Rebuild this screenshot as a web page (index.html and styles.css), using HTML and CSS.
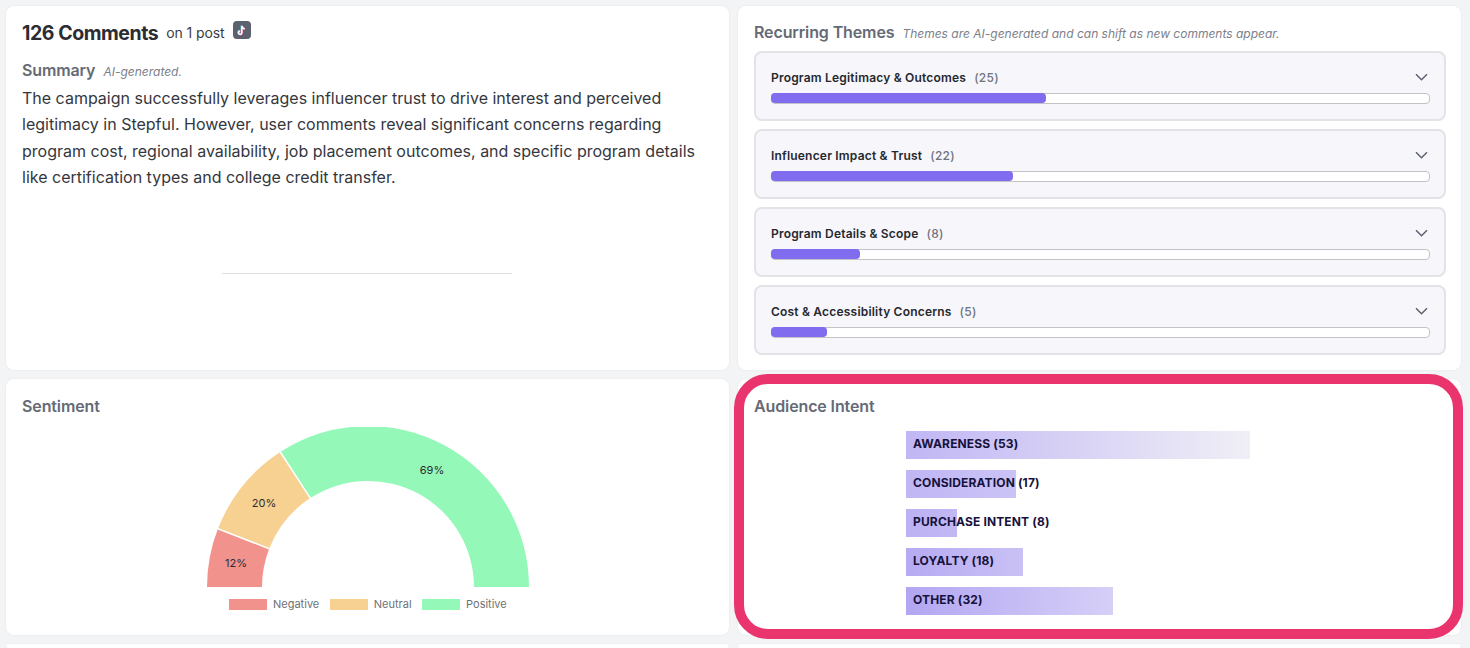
FILE: index.html
```html
<!DOCTYPE html>
<html lang="en">
<head>
    <meta charset="UTF-8">
    <title>Comments Analysis</title>
    <link rel="stylesheet" href="styles.css">
</head>
<body>
    <div class="dashboard">
        <section class="card summary-card">
            <div class="comments-head">
                <h1 class="comments-count">126 Comments</h1>
                <span class="comments-posts">on 1 post</span>
                <span class="platform-badge">
                    <svg viewBox="0 0 18 18" width="18" height="18">
                        <path class="note note-cyan" d="M8.4 4.6v6.9a1.7 1.7 0 1 1-1.7-1.7M8.4 4.6c.2 1.7 1.3 2.7 2.9 2.8"/>
                        <path class="note note-red" d="M9.4 5.2v6.9a1.7 1.7 0 1 1-1.7-1.7M9.4 5.2c.2 1.7 1.3 2.7 2.9 2.8"/>
                        <path class="note note-white" d="M8.9 4.9v6.9a1.7 1.7 0 1 1-1.7-1.7M8.9 4.9c.2 1.7 1.3 2.7 2.9 2.8"/>
                    </svg>
                </span>
            </div>
            <div class="section-head summary-head">
                <h2 class="section-title">Summary</h2>
                <span class="section-note">AI-generated.</span>
            </div>
            <p class="summary-text">The campaign successfully leverages influencer trust to drive interest and perceived legitimacy in Stepful. However, user comments reveal significant concerns regarding program cost, regional availability, job placement outcomes, and specific program details like certification types and college credit transfer.</p>
            <hr class="summary-divider">
        </section>

        <section class="card themes-card">
            <div class="section-head">
                <h2 class="section-title">Recurring Themes</h2>
                <span class="section-note">Themes are AI-generated and can shift as new comments appear.</span>
            </div>
            <div class="theme-list">
                <div class="theme">
                    <div class="theme-top">
                        <span class="theme-name">Program Legitimacy &amp; Outcomes</span>
                        <span class="theme-count">(25)</span>
                        <svg class="chevron" viewBox="0 0 13 8" width="13" height="8"><path d="M1 1.2l5.5 5.5L12 1.2"/></svg>
                    </div>
                    <div class="theme-track"><div class="theme-fill" style="width: 41.8%"></div></div>
                </div>
                <div class="theme">
                    <div class="theme-top">
                        <span class="theme-name">Influencer Impact &amp; Trust</span>
                        <span class="theme-count">(22)</span>
                        <svg class="chevron" viewBox="0 0 13 8" width="13" height="8"><path d="M1 1.2l5.5 5.5L12 1.2"/></svg>
                    </div>
                    <div class="theme-track"><div class="theme-fill" style="width: 36.8%"></div></div>
                </div>
                <div class="theme">
                    <div class="theme-top">
                        <span class="theme-name">Program Details &amp; Scope</span>
                        <span class="theme-count">(8)</span>
                        <svg class="chevron" viewBox="0 0 13 8" width="13" height="8"><path d="M1 1.2l5.5 5.5L12 1.2"/></svg>
                    </div>
                    <div class="theme-track"><div class="theme-fill" style="width: 13.5%"></div></div>
                </div>
                <div class="theme">
                    <div class="theme-top">
                        <span class="theme-name">Cost &amp; Accessibility Concerns</span>
                        <span class="theme-count">(5)</span>
                        <svg class="chevron" viewBox="0 0 13 8" width="13" height="8"><path d="M1 1.2l5.5 5.5L12 1.2"/></svg>
                    </div>
                    <div class="theme-track"><div class="theme-fill" style="width: 8.5%"></div></div>
                </div>
            </div>
        </section>

        <section class="card sentiment-card">
            <h2 class="section-title">Sentiment</h2>
            <svg class="gauge" viewBox="207 427 322 160" width="322" height="160">
                <path class="slice-negative" d="M207 587A161 161 0 0 1 217.9 528.8L269.2 548.7A106 106 0 0 0 262 587Z"/>
                <path class="slice-neutral" d="M217.9 528.8A161 161 0 0 1 280.3 452L310.3 498.1A106 106 0 0 0 269.2 548.7Z"/>
                <path class="slice-positive" d="M280.3 452A161 161 0 0 1 529 587H474A106 106 0 0 0 310.3 498.1Z"/>
                <path class="slice-gap" d="M217.9 528.8L269.2 548.7M280.3 452L310.3 498.1"/>
                <text class="gauge-label" x="236" y="567">12%</text>
                <text class="gauge-label" x="264" y="507">20%</text>
                <text class="gauge-label" x="432" y="474">69%</text>
            </svg>
            <div class="legend">
                <span class="legend-item"><i class="swatch swatch-negative"></i>Negative</span>
                <span class="legend-item"><i class="swatch swatch-neutral"></i>Neutral</span>
                <span class="legend-item"><i class="swatch swatch-positive"></i>Positive</span>
            </div>
        </section>

        <section class="card intent-card">
            <h2 class="section-title">Audience Intent</h2>
            <div class="intent-list">
                <div class="intent-bar intent-awareness" style="width: 344px"><span>AWARENESS (53)</span></div>
                <div class="intent-bar intent-consideration" style="width: 110px"><span>CONSIDERATION (17)</span></div>
                <div class="intent-bar intent-purchase" style="width: 51px"><span>PURCHASE INTENT (8)</span></div>
                <div class="intent-bar intent-loyalty" style="width: 117px"><span>LOYALTY (18)</span></div>
                <div class="intent-bar intent-other" style="width: 207px"><span>OTHER (32)</span></div>
            </div>
            <div class="highlight-ring"></div>
        </section>

        <section class="card next-card"></section>
        <section class="card next-card"></section>
    </div>
</body>
</html>
```

FILE: styles.css
```css
* {
    margin: 0;
    padding: 0;
    box-sizing: border-box;
}

html, body {
    height: 648px;
    overflow: hidden;
}

body {
    background-color: #f3f4f6;
    color: #2b2d33;
    font-family: Inter, "Noto Sans", sans-serif;
}

.dashboard {
    display: grid;
    grid-template-columns: 723px 723px;
    grid-template-rows: 364px 256px 4px;
    gap: 9px;
    padding: 6px 9px 0 6px;
}

.card {
    position: relative;
    background: #fff;
    border-radius: 8px;
    box-shadow: 0 0 2px rgba(0, 0, 0, 0.08);
    padding: 16px;
}

/* summary */
.comments-head {
    display: flex;
    align-items: flex-start;
    height: 24px;
}

.comments-count {
    font-size: 19.5px;
    line-height: 22px;
    font-weight: 700;
    letter-spacing: -0.45px;
    color: #2b2d33;
}

.comments-posts {
    margin: 2px 0 0 8px;
    font-size: 14px;
    line-height: 18px;
    letter-spacing: -0.1px;
    color: #3a3d45;
}

.platform-badge {
    display: flex;
    width: 18px;
    height: 18px;
    margin: -1px 0 0 8px;
    background: #5c6170;
    border-radius: 4px;
}

.note {
    fill: none;
    stroke-width: 1.5;
}

.note-cyan { stroke: #58e3ea; }
.note-red { stroke: #f0436b; }
.note-white { stroke: #fff; }

.section-head {
    display: flex;
    align-items: baseline;
    gap: 8px;
}

.summary-head {
    margin-top: 14px;
}

.section-title {
    font-size: 16px;
    line-height: 20px;
    font-weight: 600;
    letter-spacing: -0.12px;
    color: #656a75;
}

.section-note {
    font-size: 12px;
    font-style: italic;
    color: #7b808a;
}

.summary-text {
    margin-top: 5px;
    font-size: 16px;
    line-height: 26.3px;
    color: #35373d;
}

.summary-divider {
    width: 290px;
    margin: 83px 0 0 200px;
    border: 0;
    border-top: 1px solid #dedfe2;
}

/* themes */
.theme-list {
    display: flex;
    flex-direction: column;
    gap: 8px;
    margin: 9px -1px 0 0;
}

.theme {
    height: 70px;
    padding: 15px 14px 0 15px;
    background: #f6f6fb;
    border: 2px solid #e2e3e6;
    border-radius: 8px;
}

.theme-top {
    display: flex;
    align-items: center;
    gap: 8px;
    height: 18px;
}

.theme-name {
    font-size: 12px;
    font-weight: 600;
    letter-spacing: 0.2px;
    color: #26282e;
}

.theme-count {
    font-size: 12px;
    font-weight: 500;
    letter-spacing: 0.3px;
    color: #6f737d;
}

.chevron {
    margin-left: auto;
    margin-right: 2px;
    fill: none;
    stroke: #5c6170;
    stroke-width: 1.5;
}

.theme-track {
    height: 11px;
    margin-top: 7px;
    background: #fff;
    border: 1px solid #c2c3c7;
    border-radius: 4px;
}

.theme-fill {
    height: 100%;
    margin: -1px 0 0 -1px;
    box-sizing: content-box;
    padding-bottom: 1px;
    background: #7f6cef;
    border-radius: 4px;
}

/* sentiment */
.sentiment-card .section-title,
.intent-card .section-title {
    margin-top: 1px;
}

.gauge {
    display: block;
    margin: 11px 0 0 185px;
}

.slice-negative { fill: #f2928d; }
.slice-neutral { fill: #f7d191; }
.slice-positive { fill: #94f8b8; }

.slice-gap {
    fill: none;
    stroke: #fff;
    stroke-width: 1.5;
}

.gauge-label {
    font-size: 11px;
    text-anchor: middle;
    fill: #2b2d33;
}

.legend {
    display: flex;
    margin: 11px 0 0 207px;
    font-size: 11px;
    line-height: 13px;
    color: #6f7176;
}

.legend-item {
    display: flex;
    align-items: center;
    gap: 6px;
    margin-right: 10.5px;
}

.swatch {
    display: block;
    width: 38px;
    height: 11px;
}

.swatch-negative { background: #f2928d; }
.swatch-neutral { background: #f7d191; }
.swatch-positive { background: #94f8b8; }

/* audience intent */
.intent-list {
    display: flex;
    flex-direction: column;
    gap: 11px;
    margin: 15px 0 0 152px;
}

.intent-bar {
    height: 28px;
    padding-left: 7px;
    font-size: 12px;
    line-height: 26px;
    font-weight: 700;
    letter-spacing: 0.15px;
    white-space: nowrap;
    color: #16123c;
}

.intent-awareness { background: linear-gradient(90deg, #c0b6f4, #f0eff6); }
.intent-consideration { background: linear-gradient(90deg, #c0b6f4, #cac3f6); }
.intent-purchase { background: linear-gradient(90deg, #bcb1f3, #c2b8f4); }
.intent-loyalty { background: linear-gradient(90deg, #b6aaf2, #c9c1f5); }
.intent-other { background: linear-gradient(90deg, #b3a6f2, #d6cff7); }

.highlight-ring {
    position: absolute;
    top: -5px;
    left: -4px;
    right: -2px;
    bottom: -4px;
    border: 10px solid #ea346d;
    border-radius: 34px;
}

.next-card {
    padding: 0;
}
```
